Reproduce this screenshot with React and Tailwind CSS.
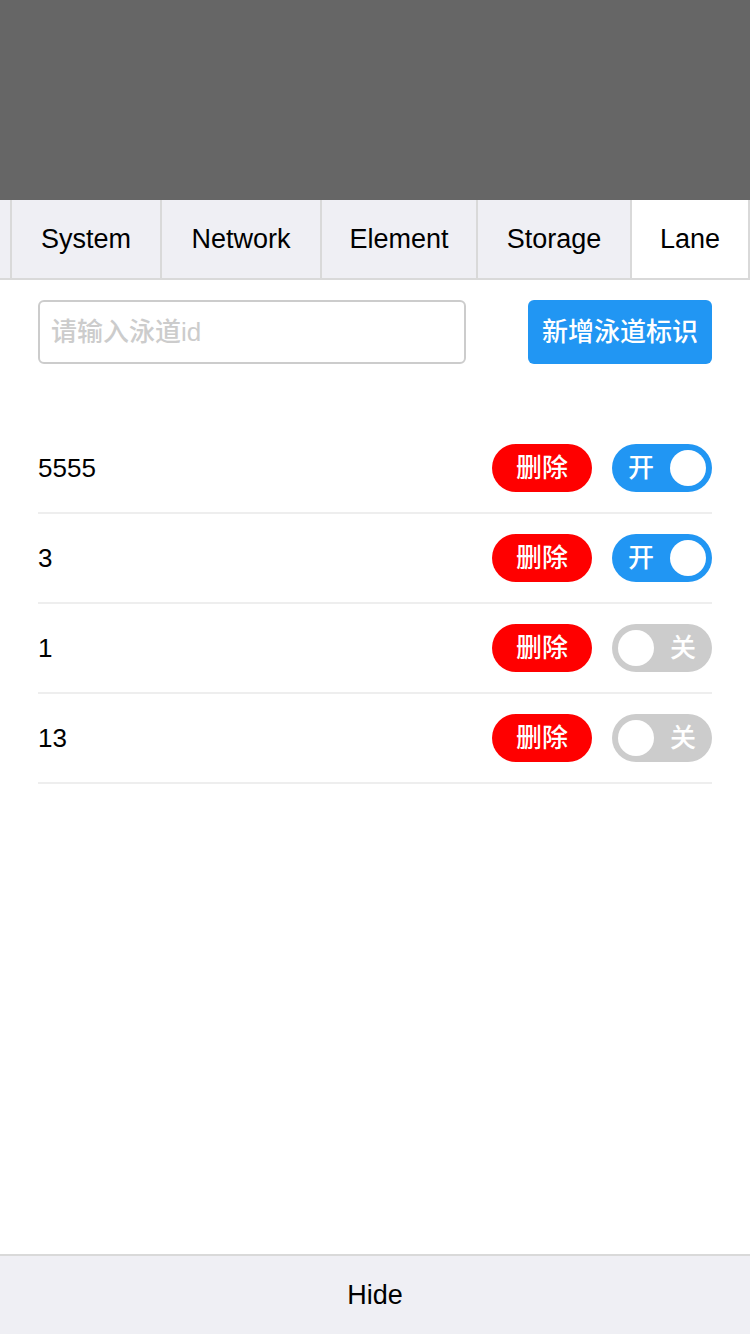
import React, { useState } from "react";

const font = { fontFamily: '"Liberation Sans", "Noto Sans CJK SC", sans-serif' };

const tabs = [
  { name: "", w: "w-[12px]" },
  { name: "System", w: "w-[150px]" },
  { name: "Network", w: "w-[160px]" },
  { name: "Element", w: "w-[156px]" },
  { name: "Storage", w: "w-[154px]" },
  { name: "Lane", w: "w-[118px]", active: true },
];

export default function App() {
  const [lanes, setLanes] = useState([
    { id: "5555", on: true },
    { id: "3", on: true },
    { id: "1", on: false },
    { id: "13", on: false },
  ]);

  const toggle = (id) => {
    setLanes(lanes.map((l) => (l.id === id ? { ...l, on: !l.on } : l)));
  };

  return (
    <div className="h-[1334px] w-[750px] flex flex-col bg-white text-black" style={font}>
      {/* dimmed page behind the panel */}
      <div className="h-[200px] bg-[#666666]" />

      {/* tabs */}
      <div className="h-[80px] flex bg-[#efeff4] border-b-2 border-[#d9d9d9]">
        {tabs.map((t, i) => (
          <div
            key={i}
            className={`${t.w} shrink-0 h-full flex items-center justify-center text-[27px] border-r-2 border-[#d9d9d9] ${
              t.active ? "bg-white" : ""
            }`}
          >
            {t.name}
          </div>
        ))}
      </div>

      {/* lane content */}
      <div className="flex-1 px-[38px] pt-5">
        <div className="flex items-center justify-between">
          <input
            type="text"
            placeholder="请输入泳道id"
            className="w-[428px] h-[64px] border-2 border-[#cccccc] rounded-md px-[11px] text-[26px] font-medium placeholder:text-[#cccccc] outline-none"
          />
          <button className="w-[184px] h-[64px] bg-[#2196f3] text-white text-[26px] font-medium rounded-md">
            新增泳道标识
          </button>
        </div>

        <div className="mt-[60px]">
          {lanes.map((l) => (
            <div
              key={l.id}
              className="h-[90px] flex items-center justify-between border-b-2 border-[#eeeeee]"
            >
              <span className="text-[26px]">{l.id}</span>
              <div className="flex items-center gap-5">
                <button className="w-[100px] h-[48px] rounded-full bg-[#ff0000] text-white text-[26px] font-medium">
                  删除
                </button>
                <button
                  onClick={() => toggle(l.id)}
                  className={`w-[100px] h-[48px] rounded-full flex items-center justify-between px-[6px] text-white text-[26px] font-medium ${
                    l.on ? "bg-[#2196f3] pl-[16px]" : "bg-[#cccccc] pr-[16px]"
                  }`}
                >
                  {l.on ? (
                    <>
                      <span>开</span>
                      <span className="w-[36px] h-[36px] rounded-full bg-white" />
                    </>
                  ) : (
                    <>
                      <span className="w-[36px] h-[36px] rounded-full bg-white" />
                      <span>关</span>
                    </>
                  )}
                </button>
              </div>
            </div>
          ))}
        </div>
      </div>

      {/* bottom bar */}
      <div className="h-[80px] flex items-center justify-center bg-[#efeff4] border-t-2 border-[#d9d9d9] text-[27px]">
        Hide
      </div>
    </div>
  );
}
